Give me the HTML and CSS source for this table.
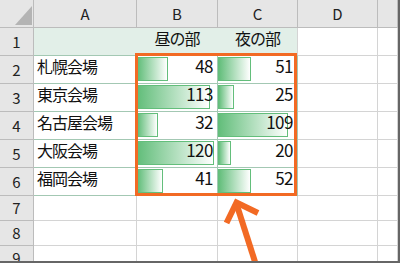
FILE: index.html
```html
<!DOCTYPE html>
<html lang="ja">
<head>
<meta charset="utf-8">
<title>会場別 来場者数</title>
<link rel="stylesheet" href="styles.css">
</head>
<body>
<div class="window">
  <div class="sheet">
    <!-- column headers -->
    <div class="cell hd corner"><span class="corner-mark"></span></div>
    <div class="cell hd">A</div>
    <div class="cell hd">B</div>
    <div class="cell hd">C</div>
    <div class="cell hd">D</div>
    <div class="cell hd"></div>

    <!-- row 1 -->
    <div class="cell hd">1</div>
    <div class="cell band"></div>
    <div class="cell band title">昼の部</div>
    <div class="cell band band-end title">夜の部</div>
    <div class="cell"></div>
    <div class="cell"></div>

    <!-- row 2 -->
    <div class="cell hd">2</div>
    <div class="cell tb name">札幌会場</div>
    <div class="cell tb num"><span class="bar" style="width:30.8px"></span><span class="val">48</span></div>
    <div class="cell tb num"><span class="bar" style="width:32.7px"></span><span class="val">51</span></div>
    <div class="cell"></div>
    <div class="cell"></div>

    <!-- row 3 -->
    <div class="cell hd">3</div>
    <div class="cell tb name">東京会場</div>
    <div class="cell tb num"><span class="bar" style="width:72.5px"></span><span class="val">113</span></div>
    <div class="cell tb num"><span class="bar" style="width:16px"></span><span class="val">25</span></div>
    <div class="cell"></div>
    <div class="cell"></div>

    <!-- row 4 -->
    <div class="cell hd">4</div>
    <div class="cell tb name">名古屋会場</div>
    <div class="cell tb num"><span class="bar" style="width:20.5px"></span><span class="val">32</span></div>
    <div class="cell tb num"><span class="bar" style="width:69.9px"></span><span class="val">109</span></div>
    <div class="cell"></div>
    <div class="cell"></div>

    <!-- row 5 -->
    <div class="cell hd">5</div>
    <div class="cell tb name">大阪会場</div>
    <div class="cell tb num"><span class="bar" style="width:77px"></span><span class="val">120</span></div>
    <div class="cell tb num"><span class="bar" style="width:12.8px"></span><span class="val">20</span></div>
    <div class="cell"></div>
    <div class="cell"></div>

    <!-- row 6 -->
    <div class="cell hd">6</div>
    <div class="cell tb name">福岡会場</div>
    <div class="cell tb num"><span class="bar" style="width:26.3px"></span><span class="val">41</span></div>
    <div class="cell tb num"><span class="bar" style="width:33.4px"></span><span class="val">52</span></div>
    <div class="cell"></div>
    <div class="cell"></div>

    <!-- rows 7-9 -->
    <div class="cell hd">7</div>
    <div class="cell"></div><div class="cell"></div><div class="cell"></div><div class="cell"></div><div class="cell"></div>
    <div class="cell hd">8</div>
    <div class="cell"></div><div class="cell"></div><div class="cell"></div><div class="cell"></div><div class="cell"></div>
    <div class="cell hd">9</div>
    <div class="cell"></div><div class="cell"></div><div class="cell"></div><div class="cell"></div><div class="cell"></div>
  </div>

  <!-- callout frame around B2:C6 -->
  <div class="callout"></div>

  <!-- pointer arrow -->
  <svg class="arrow" width="398" height="261" viewBox="0 0 398 261">
    <path d="M226.5 223 L236.5 202.5 L258 213" fill="none" stroke="#f26a24" stroke-width="6" stroke-linejoin="miter"/>
    <path d="M236.5 204 L257 268" fill="none" stroke="#f26a24" stroke-width="6"/>
  </svg>
</div>
</body>
</html>
```

FILE: styles.css
```css
body {
  margin: 0;
  background: #fff;
}

.window {
  position: relative;
  width: 400px;
  height: 263px;
  box-sizing: border-box;
  border-right: 2px solid #666;
  border-bottom: 2px solid #666;
  overflow: hidden;
  background: #fff;
  font-family: "Noto Sans CJK JP", sans-serif;
  color: #111;
}

.sheet {
  display: grid;
  grid-template-columns: 34px 103px 81px 80px 80px 20px;
  grid-template-rows: repeat(7, 28px) repeat(3, 25px);
}

.cell {
  box-sizing: border-box;
  border-right: 1px solid #d4d4d4;
  border-bottom: 1px solid #d4d4d4;
  display: flex;
  align-items: center;
  min-width: 0;
  font-size: 16px;
  line-height: 1.2;
}

/* row / column headings */
.hd {
  background: #e6e6e6;
  border-color: #bcbcbc;
  justify-content: center;
  font-size: 15px;
  color: #222;
}

.corner {
  justify-content: flex-end;
  align-items: flex-end;
  padding: 0 1px 2px 0;
}

.corner-mark {
  width: 17px;
  height: 19px;
  background: #b4b4b4;
  clip-path: polygon(100% 0, 100% 100%, 0 100%);
}

/* title band in row 1 */
.band {
  background: #e2efe8;
  border-right-color: transparent;
  border-bottom-color: #a3c8b3;
}

.band-end {
  border-right-color: #d4d4d4;
}

.title {
  justify-content: center;
  padding-bottom: 5px;
  letter-spacing: -1px;
}

/* bordered table body */
.tb {
  border-color: #a3c8b3;
}

.name {
  padding: 0 0 6px 3px;
  letter-spacing: -1px;
}

.num {
  display: grid;
}

.bar {
  grid-area: 1 / 1;
  justify-self: start;
  align-self: start;
  box-sizing: border-box;
  height: 24px;
  margin-top: 1px;
  border: 1px solid #63be7b;
  background: linear-gradient(to right, #63be7b, #ffffff);
}

.val {
  grid-area: 1 / 1;
  justify-self: end;
  align-self: center;
  margin: 0 4px 6px 0;
  font-size: 17px;
  letter-spacing: -0.5px;
}

/* annotation overlays */
.callout {
  position: absolute;
  left: 135px;
  top: 53px;
  width: 162px;
  height: 143px;
  box-sizing: border-box;
  border: 3px solid #f26a24;
}

.arrow {
  position: absolute;
  left: 0;
  top: 0;
}
```
